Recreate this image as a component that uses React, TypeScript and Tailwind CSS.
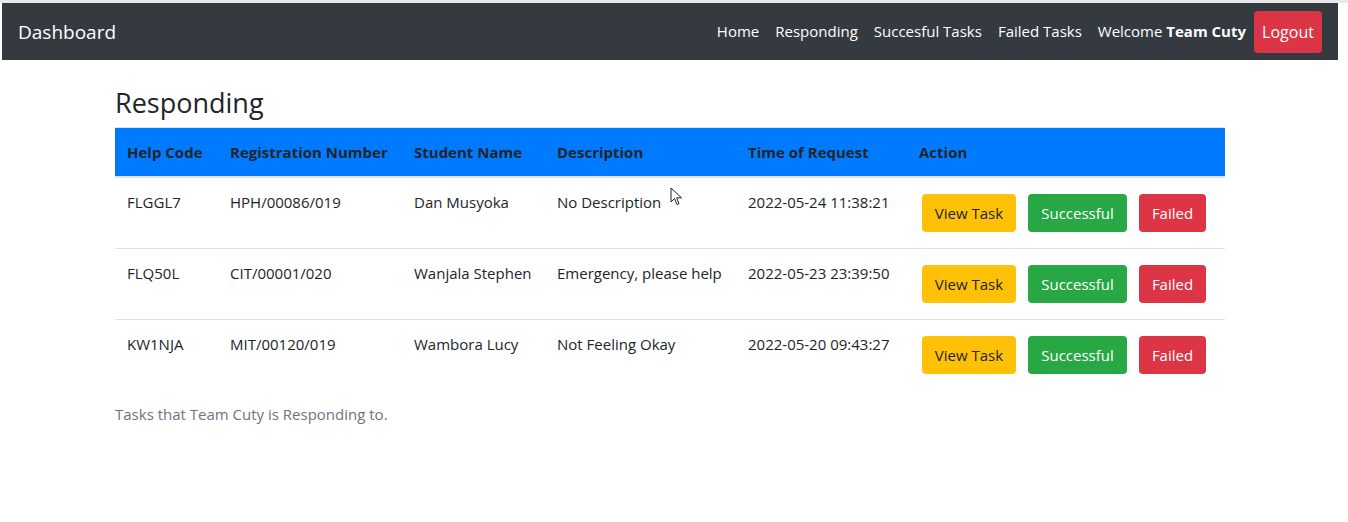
import React from 'react';

type Task = {
  code: string;
  reg: string;
  name: string;
  desc: string;
  time: string;
};

const tasks: Task[] = [
  { code: 'FLGGL7', reg: 'HPH/00086/019', name: 'Dan Musyoka', desc: 'No Description', time: '2022-05-24 11:38:21' },
  { code: 'FLQ50L', reg: 'CIT/00001/020', name: 'Wanjala Stephen', desc: 'Emergency, please help', time: '2022-05-23 23:39:50' },
  { code: 'KW1NJA', reg: 'MIT/00120/019', name: 'Wambora Lucy', desc: 'Not Feeling Okay', time: '2022-05-20 09:43:27' },
];

const navLinks = ['Home', 'Responding', 'Succesful Tasks', 'Failed Tasks'];

const Cursor: React.FC = () => (
  <svg className="absolute left-[670px] top-[187px]" width="13" height="20" viewBox="0 0 13 20">
    <path d="M1 1 L1 15 L4.5 11.5 L7 17.5 L9 16.6 L6.6 10.8 L11.5 10.8 Z" fill="#fff" stroke="#222" strokeWidth="1" strokeLinejoin="round" />
  </svg>
);

const App: React.FC = () => {
  return (
    <div className="relative min-h-screen bg-white text-[#212529] text-[15px] leading-6 font-['Open_Sans',sans-serif]">
      <div className="h-[3px] bg-[#e8e8e8]" />
      <nav className="ml-[2px] w-[1336px] h-[57px] bg-[#343a40] flex items-center justify-between pl-4 pr-4">
        <span className="text-white text-[19px] leading-[30px]">Dashboard</span>
        <div className="flex items-center">
          {navLinks.map((l) => (
            <a key={l} className="px-2 text-white leading-6 -mt-[2px]">{l}</a>
          ))}
          <span className="px-2 text-white leading-6 -mt-[2px]">
            Welcome <b className="font-bold">Team Cuty</b>
          </span>
          <button className="w-[68px] h-[42px] rounded bg-[#dc3545] text-white text-[16px]">Logout</button>
        </div>
      </nav>

      <main className="ml-[115px] w-[1110px]">
        <h3 className="mt-[26px] mb-[7px] text-[27px] leading-[34px] font-medium">Responding</h3>
        <table className="w-full table-fixed border-collapse">
          <thead>
            <tr className="bg-[#007bff] text-left">
              {[
                ['Help Code', 'w-[103px]'],
                ['Registration Number', 'w-[184px]'],
                ['Student Name', 'w-[143px]'],
                ['Description', 'w-[191px]'],
                ['Time of Request', 'w-[171px]'],
                ['Action', ''],
              ].map(([h, w]) => (
                <th key={h} className={`${w} p-3 font-bold border-t border-b-2 border-[#dee2e6] align-bottom whitespace-nowrap`}>
                  {h}
                </th>
              ))}
            </tr>
          </thead>
          <tbody>
            {tasks.map((t, i) => (
              <tr key={t.code}>
                {[t.code, t.reg, t.name, t.desc, t.time].map((v, j) => (
                  <td key={j} className={`p-3 align-top whitespace-nowrap ${i > 0 ? 'border-t border-[#dee2e6]' : ''}`}>
                    {v}
                  </td>
                ))}
                <td className={`p-3 align-top ${i > 0 ? 'border-t border-[#dee2e6]' : ''}`}>
                  <div className="flex gap-3 pl-[3px] py-1">
                    <button className="w-[94px] h-[38px] rounded bg-[#ffc107] text-[#212529]">View Task</button>
                    <button className="w-[99px] h-[38px] rounded bg-[#28a745] text-white">Successful</button>
                    <button className="w-[67px] h-[38px] rounded bg-[#dc3545] text-white">Failed</button>
                  </div>
                </td>
              </tr>
            ))}
          </tbody>
        </table>
        <p className="pt-3 text-[#6c757d]">Tasks that Team Cuty is Responding to.</p>
      </main>
      <Cursor />
    </div>
  );
};

export default App;
